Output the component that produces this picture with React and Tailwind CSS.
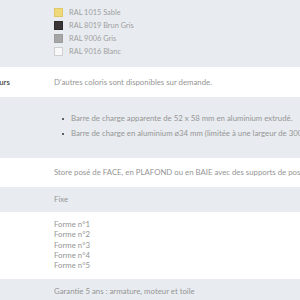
const swatches = [
  { name: "RAL 1015 Sable", color: "bg-[#efd97c]", border: "border-[#e2c966]" },
  { name: "RAL 8019 Brun Gris", color: "bg-[#3a3638]", border: "border-[#2e2a2c]" },
  { name: "RAL 9006 Gris", color: "bg-[#a6a6a6]", border: "border-[#9c9c9c]" },
  { name: "RAL 9016 Blanc", color: "bg-[#f8f8f8]", border: "border-[#cfcfcf]" },
];

const formes = ["Forme n°1", "Forme n°2", "Forme n°3", "Forme n°4", "Forme n°5"];

export default function App() {
  return (
    <div className="w-[300px] h-[300px] overflow-hidden bg-white font-['Lato',_sans-serif] text-[7.8px] text-[#959595]">
      <div className="-ml-[50px] w-[440px]">
        {/* Coloris */}
        <div className="flex bg-[#e8ecf0] pt-[8px] pb-[11px]">
          <div className="w-[104px] shrink-0" />
          <div className="flex flex-col gap-[4px]">
            {swatches.map((s) => (
              <div key={s.name} className="flex items-center gap-[6px] h-[9px]">
                <span className={`w-[9px] h-[9px] border ${s.color} ${s.border}`} />
                <span className="text-[7.4px] text-[#a0a0a0]">{s.name}</span>
              </div>
            ))}
          </div>
        </div>

        {/* Autres couleurs */}
        <div className="flex bg-white py-[10px] leading-[10px]">
          <div className="w-[104px] shrink-0 pl-[6px] font-semibold text-[#444]">Autres couleurs</div>
          <div>D'autres coloris sont disponibles sur demande.</div>
        </div>

        {/* Barre de charge */}
        <div className="flex bg-[#e8ecf0] pt-[14px] pb-[17px] leading-[15px]">
          <div className="w-[104px] shrink-0" />
          <ul className="pl-[8px] whitespace-nowrap">
            <li className="flex items-center gap-[7px]">
              <span className="w-[2px] h-[2px] rounded-full bg-[#333]" />
              Barre de charge apparente de 52 x 58 mm en aluminium extrudé.
            </li>
            <li className="flex items-center gap-[7px]">
              <span className="w-[2px] h-[2px] rounded-full bg-[#333]" />
              Barre de charge en aluminium ø34 mm (limitée à une largeur de 3000 mm)
            </li>
          </ul>
        </div>

        {/* Pose */}
        <div className="flex bg-white pt-[9px] pb-[10px] leading-[10px]">
          <div className="w-[104px] shrink-0" />
          <div className="whitespace-nowrap">
            Store posé de FACE, en PLAFOND ou en BAIE avec des supports de pose adaptés.
          </div>
        </div>

        {/* Type */}
        <div className="flex bg-[#e8ecf0] pt-[7px] pb-[8px] leading-[10px]">
          <div className="w-[104px] shrink-0" />
          <div>Fixe</div>
        </div>

        {/* Formes */}
        <div className="flex bg-white pt-[7px] pb-[9px] leading-[10.3px]">
          <div className="w-[104px] shrink-0" />
          <div className="flex flex-col">
            {formes.map((f) => (
              <span key={f}>{f}</span>
            ))}
          </div>
        </div>

        {/* Garantie */}
        <div className="flex bg-[#e8ecf0] pt-[7px] pb-[10px] leading-[10px]">
          <div className="w-[104px] shrink-0" />
          <div>Garantie 5 ans : armature, moteur et toile</div>
        </div>
      </div>
    </div>
  );
}
